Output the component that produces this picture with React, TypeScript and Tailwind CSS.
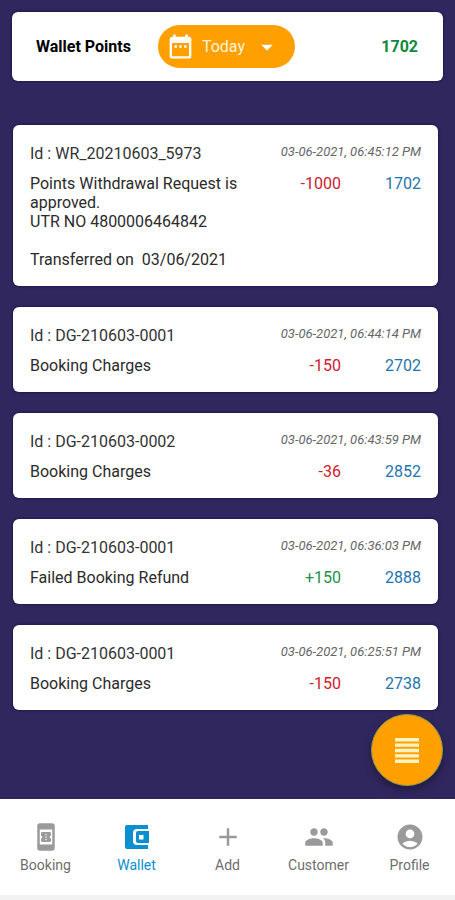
import type { ComponentType } from "react";
import {
  MdAccountCircle,
  MdAdd,
  MdArrowDropDown,
  MdBookOnline,
  MdDateRange,
  MdPeople,
} from "react-icons/md";

type Transaction = {
  id: string;
  time: string;
  description: string;
  amount: string;
  balance: string;
};

const transactions: Transaction[] = [
  {
    id: "WR_20210603_5973",
    time: "03-06-2021, 06:45:12 PM",
    description:
      "Points Withdrawal Request is approved.\nUTR NO 4800006464842\n\nTransferred on  03/06/2021",
    amount: "-1000",
    balance: "1702",
  },
  {
    id: "DG-210603-0001",
    time: "03-06-2021, 06:44:14 PM",
    description: "Booking Charges",
    amount: "-150",
    balance: "2702",
  },
  {
    id: "DG-210603-0002",
    time: "03-06-2021, 06:43:59 PM",
    description: "Booking Charges",
    amount: "-36",
    balance: "2852",
  },
  {
    id: "DG-210603-0001",
    time: "03-06-2021, 06:36:03 PM",
    description: "Failed Booking Refund",
    amount: "+150",
    balance: "2888",
  },
  {
    id: "DG-210603-0001",
    time: "03-06-2021, 06:25:51 PM",
    description: "Booking Charges",
    amount: "-150",
    balance: "2738",
  },
];

type IconProps = { className?: string };

function WalletIcon({ className }: IconProps) {
  return (
    <svg viewBox="0 0 30 30" fill="currentColor" fillRule="evenodd" className={className} aria-hidden="true">
      <path d="M5 3h21v4H15a4 4 0 0 0-4 4v8a4 4 0 0 0 4 4h11v4H5a2 2 0 0 1-2-2V5a2 2 0 0 1 2-2z" />
      <path d="M16 9h11v12H16a2 2 0 0 1-2-2v-8a2 2 0 0 1 2-2zm1 4v4.5h4.5V13z" />
    </svg>
  );
}

function LinesIcon({ className }: IconProps) {
  return (
    <svg viewBox="0 0 24 25" fill="currentColor" className={className} aria-hidden="true">
      <path d="M0 0h24v3.4H0zM0 5.4h24v3.4H0zM0 10.8h24v3.4H0zM0 16.2h24v3.4H0zM0 21.6h24V25H0z" />
    </svg>
  );
}

const tabs: { label: string; icon: ComponentType<IconProps>; active?: boolean }[] = [
  { label: "Booking", icon: MdBookOnline },
  { label: "Wallet", icon: WalletIcon, active: true },
  { label: "Add", icon: MdAdd },
  { label: "Customer", icon: MdPeople },
  { label: "Profile", icon: MdAccountCircle },
];

function Header() {
  return (
    <header className="mx-3 mt-3 flex h-[69px] items-center rounded-md bg-white pr-[25px] pl-6 shadow-[0_0_3px_#120640]">
      <h1 className="text-base font-bold text-black">Wallet Points</h1>
      <div className="relative ml-[27px] flex h-[43px] w-[137px] items-center rounded-full bg-[#ffa000] text-white">
        <MdDateRange className="pointer-events-none absolute left-2 size-[29px]" />
        <select
          aria-label="Period"
          defaultValue="Today"
          className="size-full cursor-pointer appearance-none rounded-full bg-transparent pl-11 text-base text-[#fff3d6]"
        >
          <option>Today</option>
        </select>
        <MdArrowDropDown className="pointer-events-none absolute right-[14px] size-7" />
      </div>
      <span className="ml-auto text-base font-bold text-[#0f8a3c]">1702</span>
    </header>
  );
}

function TransactionCard({ item }: { item: Transaction }) {
  const credit = item.amount.startsWith("+");
  return (
    <li className="rounded-md bg-white px-[17px] pt-[19px] pb-[17px] shadow-[0_0_3px_#120640]">
      <div className="flex items-start justify-between">
        <span className="text-base leading-5 text-[#333]">Id : {item.id}</span>
        <time className="text-[13px] leading-4 text-[#666] italic">{item.time}</time>
      </div>
      <div className="mt-[10px] flex text-base leading-[19px]">
        <p className="flex-1 whitespace-pre-wrap text-[#2b2b2b]">{item.description}</p>
        <span className={credit ? "w-20 text-right text-[#1f9048]" : "w-20 text-right text-[#d0202c]"}>
          {item.amount}
        </span>
        <span className="w-20 text-right text-[#1f74ae]">{item.balance}</span>
      </div>
    </li>
  );
}

function TabBar() {
  return (
    <nav className="grid h-[101px] grid-cols-5 border-b-[5px] border-[#f2f2f2] bg-white pt-[23px]">
      {tabs.map(({ label, icon: Icon, active }) => (
        <a
          key={label}
          href={"#" + label.toLowerCase()}
          aria-current={active ? "page" : undefined}
          className={
            active
              ? "flex flex-col items-center gap-[5px] text-[#0a8fd0]"
              : "flex flex-col items-center gap-[5px] text-[#9a9a9a]"
          }
        >
          <Icon className="size-[30px]" />
          <span className={active ? "text-sm leading-4" : "text-sm leading-4 text-[#6e6e6e]"}>{label}</span>
        </a>
      ))}
    </nav>
  );
}

export default function App() {
  return (
    <div className="flex min-h-screen flex-col bg-[#31275f] font-[Roboto,sans-serif]">
      <Header />
      <main className="flex-1">
        <ul className="mt-11 mr-[17px] ml-[13px] flex flex-col gap-[21px]">
          {transactions.map((item) => (
            <TransactionCard key={item.time} item={item} />
          ))}
        </ul>
      </main>
      <button
        type="button"
        aria-label="Menu"
        className="fixed right-3 bottom-[114px] flex size-[72px] items-center justify-center rounded-full border border-[#8c9a50] bg-[#ffa000] text-[#fff3c4] shadow-[0_4px_8px_rgba(0,0,0,0.35)]"
      >
        <LinesIcon className="h-[25px] w-6" />
      </button>
      <TabBar />
    </div>
  );
}
